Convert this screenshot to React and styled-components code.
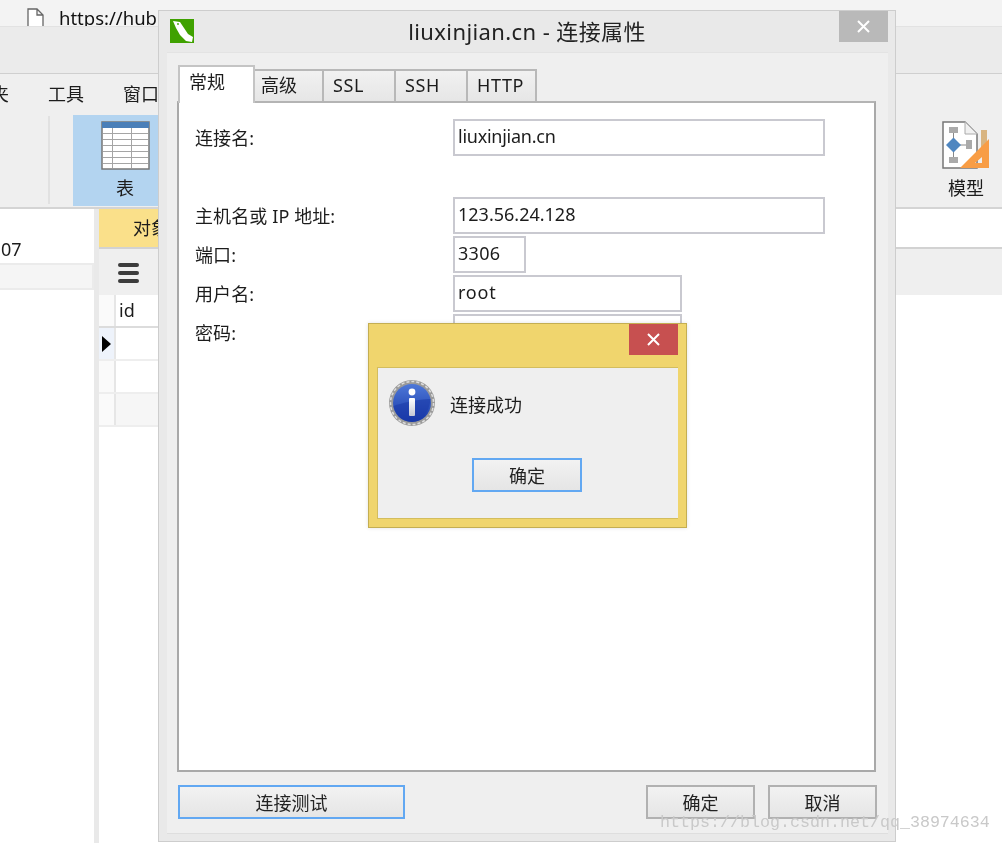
import React from 'react'
import styled, { createGlobalStyle } from 'styled-components'

const GlobalStyle = createGlobalStyle`
  html, body {
    margin: 0;
    padding: 0;
    background: #fff;
  }
  body {
    font-family: "Noto Sans", "Noto Sans CJK SC", sans-serif;
    color: #1c1c1c;
  }
`

const Screen = styled.div`
  position: relative;
  width: 1002px;
  height: 843px;
  overflow: hidden;
  background: #fff;
  filter: blur(0.35px);
`

const AddressBar = styled.div`
  height: 26px;
  background: #f3f3f3;
  display: flex;
  align-items: flex-start;
  padding-left: 27px;
  gap: 15px;
  overflow: hidden;
`

const AddressText = styled.span`
  font-size: 18.5px;
  line-height: 18px;
  padding-top: 9px;
  color: #111;
  white-space: nowrap;
`

const TitleBand = styled.div`
  height: 46px;
  background: #ebebeb;
  border-top: 1px solid #e2e2e2;
  border-bottom: 1px solid #cfcfcf;
`

const Menu = styled.div`
  height: 38px;
  background: #efefef;
  display: flex;
  align-items: center;
  gap: 39px;
  margin-left: -45px;
  font-size: 18px;
`

const MenuItem = styled.span`
  white-space: nowrap;
`

const Ribbon = styled.div`
  height: 97px;
  background: #efefef;
  border-bottom: 2px solid #d4d4d4;
  display: flex;
  align-items: stretch;
  padding: 3px 12px 1px 48px;
  box-sizing: border-box;
`

const RibbonDivider = styled.div`
  width: 2px;
  margin: 1px 23px 2px 0;
  background: #e1e1e1;
`

const RibbonButton = styled.div`
  width: ${p => p.$width};
  display: flex;
  flex-direction: column;
  align-items: center;
  padding-top: 6px;
  gap: 7px;
  font-size: 18px;
  line-height: 22px;
  background: ${p => (p.$active ? '#b3d4f0' : 'transparent')};
  margin-left: ${p => (p.$push ? 'auto' : '0')};
`

const Workspace = styled.div`
  display: flex;
  height: 634px;
`

const Navigator = styled.div`
  width: 94px;
  flex: none;
  background: #fff;
`

const NavHeader = styled.div`
  height: 54px;
  box-sizing: border-box;
  padding-top: 28px;
  font-size: 18px;
  line-height: 24px;
  text-indent: 1px;
`

const NavRow = styled.div`
  height: 27px;
  box-sizing: border-box;
  background: #f5f5f5;
  border: 2px solid #ebebeb;
  border-left: 0;
`

const Splitter = styled.div`
  width: 5px;
  flex: none;
  background: #e9e9e9;
`

const Content = styled.div`
  flex: 1;
  display: flex;
  flex-direction: column;
  min-width: 0;
`

const ObjectTabs = styled.div`
  height: 38px;
  background: #fff;
  border-bottom: 2px solid #d2d2d2;
`

const ObjectTab = styled.div`
  width: 59px;
  height: 38px;
  background: #fae08a;
  font-size: 18px;
  line-height: 38px;
  padding-left: 34px;
  box-sizing: border-box;
  white-space: nowrap;
  overflow: hidden;
`

const ObjectToolbar = styled.div`
  height: 46px;
  background: #efefef;
  padding: 14px 0 0 19px;
  box-sizing: border-box;
`

const BurgerLine = styled.div`
  width: 21px;
  height: 4px;
  border-radius: 2px;
  background: #3c3c3c;
  margin-bottom: 4px;
`

const DataGrid = styled.div`
  width: 600px;
`

const GridRow = styled.div`
  display: flex;
  height: 33px;
  box-sizing: border-box;
  border-bottom: 2px solid ${p => (p.$head ? '#dcdcdc' : '#eeeeee')};
`

const RowHead = styled.div`
  width: 17px;
  flex: none;
  box-sizing: border-box;
  display: flex;
  align-items: center;
  justify-content: center;
  background: ${p => (p.$current ? '#eef3fb' : '#fafafa')};
  border-right: 2px solid #e6e6e6;
`

const GridCell = styled.div`
  flex: 1;
  padding-left: 3px;
  font-size: 18px;
  line-height: 31px;
  background: ${p => (p.$shaded ? '#f6f6f6' : '#fff')};
`

const Dialog = styled.div`
  position: absolute;
  left: 158px;
  top: 10px;
  width: 738px;
  height: 832px;
  box-sizing: border-box;
  background: #e9e9e9;
  border: 1px solid #cdcdcd;
  display: flex;
  flex-direction: column;
`

const TitleBar = styled.div`
  height: 41px;
  flex: none;
  display: grid;
  grid-template-columns: 1fr auto 1fr;
  align-items: start;
`

const TitleIcon = styled.div`
  padding: 8px 0 0 11px;
`

const TitleText = styled.div`
  font-size: 22px;
  line-height: 30px;
  padding-top: 5px;
  letter-spacing: 0.4px;
  color: #222;
  white-space: nowrap;
`

const CloseWrap = styled.div`
  display: flex;
  justify-content: flex-end;
  padding-right: ${p => p.$inset};
`

const CloseButton = styled.div`
  width: 49px;
  height: 31px;
  display: flex;
  align-items: center;
  justify-content: center;
  background: ${p => p.$color};
`

const DialogBody = styled.div`
  flex: 1;
  margin: 0 7px 7px 8px;
  background: #efefef;
  border-top: 1px solid #e3e3e3;
  border-bottom: 1px solid #dedede;
  padding: 12px 12px 0 10px;
  display: flex;
  flex-direction: column;
`

const TabStrip = styled.div`
  height: 38px;
  flex: none;
  display: flex;
  align-items: flex-start;
  padding-left: 1px;
  position: relative;
  z-index: 1;
  margin-bottom: -2px;
`

const Tab = styled.div`
  width: ${p => p.$width};
  height: ${p => (p.$active ? '38px' : '32px')};
  margin-top: ${p => (p.$active ? '0' : '4px')};
  box-sizing: border-box;
  padding-left: ${p => p.$pad};
  padding-top: ${p => (p.$active ? '1px' : '0')};
  font-size: 18px;
  line-height: 28px;
  letter-spacing: ${p => (p.$latin ? '0.6px' : '0')};
  background: ${p => (p.$active ? '#fff' : 'linear-gradient(#f1f1f1, #e6e6e6)')};
  border-top: 2px solid ${p => (p.$active ? '#c4c4c4' : '#b8b8b8')};
  border-right: 2px solid ${p => (p.$active ? '#c4c4c4' : '#b8b8b8')};
  border-left: ${p => (p.$active ? '2px solid #c4c4c4' : '0')};
`

const Pane = styled.div`
  height: 671px;
  flex: none;
  box-sizing: border-box;
  background: #fff;
  border: 2px solid #a9a9a9;
  border-top-color: #b4b4b4;
  padding: 16px 0 0 16px;
`

const FormRow = styled.div`
  display: grid;
  grid-template-columns: 258px 1fr;
  align-items: center;
  height: 37px;
  margin-bottom: ${p => p.$gap || '2px'};
  font-size: 18px;
`

const FieldLabel = styled.span`
  padding-bottom: 2px;
  letter-spacing: 0.1px;
`

const Field = styled.div`
  width: ${p => p.$width};
  height: 37px;
  box-sizing: border-box;
  border: 2px solid #c9c9d0;
  padding-left: 3px;
  font-size: 18px;
  line-height: 30px;
  letter-spacing: ${p => p.$spaced || 0};
  white-space: nowrap;
`

const Footer = styled.div`
  display: flex;
  justify-content: space-between;
  margin-top: 13px;
  padding-left: 1px;
`

const FooterRight = styled.div`
  display: flex;
  gap: 13px;
  margin-right: -1px;
`

const Button = styled.div`
  width: ${p => p.$width};
  height: 34px;
  box-sizing: border-box;
  border: 2px solid ${p => (p.$focused ? '#62a8f2' : '#b1b1b1')};
  background: linear-gradient(#f2f2f2, #e5e5e5);
  font-size: 18px;
  display: flex;
  align-items: center;
  justify-content: center;
  color: #222;
  margin-right: ${p => p.$nudge || 0};
`

const MessageBox = styled.div`
  position: absolute;
  left: 368px;
  top: 323px;
  width: 319px;
  height: 205px;
  box-sizing: border-box;
  background: #f0d56d;
  border: 1px solid #c4ae52;
  box-shadow: 0 0 4px rgba(0, 0, 0, 0.12);
  display: flex;
  flex-direction: column;
`

const MessageTop = styled.div`
  height: 43px;
  flex: none;
`

const MessageBody = styled.div`
  flex: 1;
  margin: 0 8px 8px 8px;
  background: #efefef;
  border: 1px solid #d3bd5e;
  border-right: 0;
  display: flex;
  flex-direction: column;
  align-items: center;
`

const MessageLine = styled.div`
  align-self: stretch;
  display: flex;
  align-items: center;
  gap: 14px;
  padding: 11px 0 0 10px;
  font-size: 18px;
  margin-bottom: 31px;
`

const MessageText = styled.span`
  padding-top: 2px;
`

const Watermark = styled.div`
  position: absolute;
  left: 660px;
  top: 813px;
  font-family: "Liberation Mono", monospace;
  font-size: 16.67px;
  line-height: 20px;
  color: #c9c9c9;
  white-space: nowrap;
`

const CloseIcon = () => (
  <svg width="15" height="15" viewBox="0 0 15 15">
    <path d="M2 2 L13 13 M13 2 L2 13" stroke="#fff" strokeWidth="2" />
  </svg>
)

const PageIcon = () => (
  <svg width="17" height="18" viewBox="0 0 17 18" style={{ marginTop: 8, flex: 'none' }}>
    <path d="M1 18 V1 H10 L16 7 V18 M10 1 V7 H16" fill="#fff" stroke="#666" strokeWidth="1.3" />
  </svg>
)

const MysqlLogo = () => (
  <svg width="24" height="24" viewBox="0 0 24 24" style={{ display: 'block' }}>
    <rect width="24" height="24" fill="#3fa100" />
    <path d="M3 2 L10 3 L14 9 L18 15 L23 18 L22 23 L16 22 L10 16 L6 9Z" fill="#fff" />
    <circle cx="8" cy="5" r="0.9" fill="#3fa100" />
  </svg>
)

const TableIcon = () => (
  <svg width="49" height="49" viewBox="0 0 49 49" style={{ flex: 'none' }}>
    <rect x="1" y="1" width="47" height="47" fill="#fff" stroke="#777" strokeWidth="1.5" />
    <rect x="1" y="1" width="47" height="6" fill="#4a7fb8" />
    <path d="M2 12.5 H47 M2 18.5 H47 M2 24.5 H47 M2 30.5 H47 M2 36.5 H47 M2 42.5 H47 M11.5 7 V47 M30.5 7 V47" stroke="#a5a5a5" strokeWidth="1" />
  </svg>
)

const ModelIcon = () => (
  <svg width="48" height="49" viewBox="0 0 48 49" style={{ flex: 'none' }}>
    <path d="M1 1 H23 L35 13 V47 H1Z" fill="#fff" stroke="#777" strokeWidth="1.5" />
    <path d="M23 1 V13 H35" fill="#f1f1f1" stroke="#aaa" strokeWidth="1" />
    <path d="M11.5 9 V39 M11.5 24 H26" stroke="#888" strokeWidth="1" />
    <rect x="7" y="6" width="9" height="6" fill="#aaa" />
    <rect x="7" y="36" width="9" height="6" fill="#aaa" />
    <rect x="24" y="19" width="6" height="9" fill="#aaa" />
    <path d="M11.5 16.5 L19 24 L11.5 31.5 L4 24Z" fill="#4f86c0" />
    <rect x="39" y="9" width="6" height="20" fill="#d8b480" />
    <path d="M47 18 V47 H18Z M40 36 V42 H33Z" fill="#f89d45" fillRule="evenodd" />
  </svg>
)

const InfoIcon = () => (
  <svg width="48" height="48" viewBox="0 0 48 48" style={{ flex: 'none' }}>
    <defs>
      <linearGradient id="ball" x1="0" y1="0" x2="0" y2="1">
        <stop offset="0" stopColor="#4e78d8" />
        <stop offset="1" stopColor="#1638a8" />
      </linearGradient>
      <linearGradient id="bar" x1="0" y1="0" x2="0" y2="1">
        <stop offset="0" stopColor="#fff" />
        <stop offset="1" stopColor="#c4c8d4" />
      </linearGradient>
    </defs>
    <circle cx="24" cy="24" r="23" fill="#9a9a9a" />
    <circle cx="24" cy="24" r="21.5" fill="none" stroke="#ddd" strokeWidth="1.5" strokeDasharray="3 2" />
    <circle cx="24" cy="24" r="19" fill="url(#ball)" />
    <path d="M5.5 27 C14 24 30 20 42.5 20 C41 35 33 43 24 43 C14 43 7 36 5.5 27Z" fill="#1a3aa8" opacity="0.6" />
    <circle cx="24" cy="13" r="3.4" fill="#fff" />
    <rect x="21" y="19" width="6" height="18" rx="1" fill="url(#bar)" />
  </svg>
)

const ArrowIcon = () => (
  <svg width="9" height="16" viewBox="0 0 9 16">
    <path d="M0 0 L9 8 L0 16Z" fill="#000" />
  </svg>
)

const tabs = [
  { label: '常规', width: '77px', pad: '9px', active: true },
  { label: '高级', width: '69px', pad: '6px' },
  { label: 'SSL', width: '72px', pad: '9px', latin: true },
  { label: 'SSH', width: '72px', pad: '9px', latin: true },
  { label: 'HTTP', width: '69px', pad: '9px', latin: true },
]

const App = () => (
  <>
    <GlobalStyle />
    <Screen>
      <AddressBar>
        <PageIcon />
        <AddressText>https://hub</AddressText>
      </AddressBar>
      <TitleBand />
      <Menu>
        <MenuItem>收藏夹</MenuItem>
        <MenuItem>工具</MenuItem>
        <MenuItem>窗口</MenuItem>
      </Menu>
      <Ribbon>
        <RibbonDivider />
        <RibbonButton $width="104px" $active>
          <TableIcon />
          <span>表</span>
        </RibbonButton>
        <RibbonButton $width="48px" $push>
          <ModelIcon />
          <span>模型</span>
        </RibbonButton>
      </Ribbon>
      <Workspace>
        <Navigator>
          <NavHeader>07</NavHeader>
          <NavRow />
        </Navigator>
        <Splitter />
        <Content>
          <ObjectTabs>
            <ObjectTab>对象</ObjectTab>
          </ObjectTabs>
          <ObjectToolbar>
            <BurgerLine />
            <BurgerLine />
            <BurgerLine />
          </ObjectToolbar>
          <DataGrid>
            <GridRow $head>
              <RowHead />
              <GridCell>id</GridCell>
            </GridRow>
            <GridRow>
              <RowHead $current><ArrowIcon /></RowHead>
              <GridCell />
            </GridRow>
            <GridRow>
              <RowHead />
              <GridCell />
            </GridRow>
            <GridRow>
              <RowHead />
              <GridCell $shaded />
            </GridRow>
          </DataGrid>
        </Content>
      </Workspace>

      <Dialog>
        <TitleBar>
          <TitleIcon><MysqlLogo /></TitleIcon>
          <TitleText>liuxinjian.cn - 连接属性</TitleText>
          <CloseWrap $inset="7px">
            <CloseButton $color="#b9b9b9"><CloseIcon /></CloseButton>
          </CloseWrap>
        </TitleBar>
        <DialogBody>
          <TabStrip>
            {tabs.map(t => (
              <Tab key={t.label} $width={t.width} $pad={t.pad} $latin={t.latin} $active={t.active}>{t.label}</Tab>
            ))}
          </TabStrip>
          <Pane>
            <FormRow $gap="41px">
              <FieldLabel>连接名:</FieldLabel>
              <Field $width="372px" $spaced="-0.25px">liuxinjian.cn</Field>
            </FormRow>
            <FormRow>
              <FieldLabel>主机名或 IP 地址:</FieldLabel>
              <Field $width="372px">123.56.24.128</Field>
            </FormRow>
            <FormRow>
              <FieldLabel>端口:</FieldLabel>
              <Field $width="73px" $spaced="0.3px">3306</Field>
            </FormRow>
            <FormRow>
              <FieldLabel>用户名:</FieldLabel>
              <Field $width="229px" $spaced="0.8px">root</Field>
            </FormRow>
            <FormRow>
              <FieldLabel>密码:</FieldLabel>
              <Field $width="229px" />
            </FormRow>
          </Pane>
          <Footer>
            <Button $width="227px" $focused>连接测试</Button>
            <FooterRight>
              <Button $width="109px">确定</Button>
              <Button $width="109px">取消</Button>
            </FooterRight>
          </Footer>
        </DialogBody>
      </Dialog>

      <MessageBox>
        <MessageTop>
          <CloseWrap $inset="8px">
            <CloseButton $color="#c75050"><CloseIcon /></CloseButton>
          </CloseWrap>
        </MessageTop>
        <MessageBody>
          <MessageLine>
            <InfoIcon />
            <MessageText>连接成功</MessageText>
          </MessageLine>
          <Button $width="110px" $focused $nudge="2px">确定</Button>
        </MessageBody>
      </MessageBox>

      <Watermark>https://blog.csdn.net/qq_38974634</Watermark>
    </Screen>
  </>
)

export default App
